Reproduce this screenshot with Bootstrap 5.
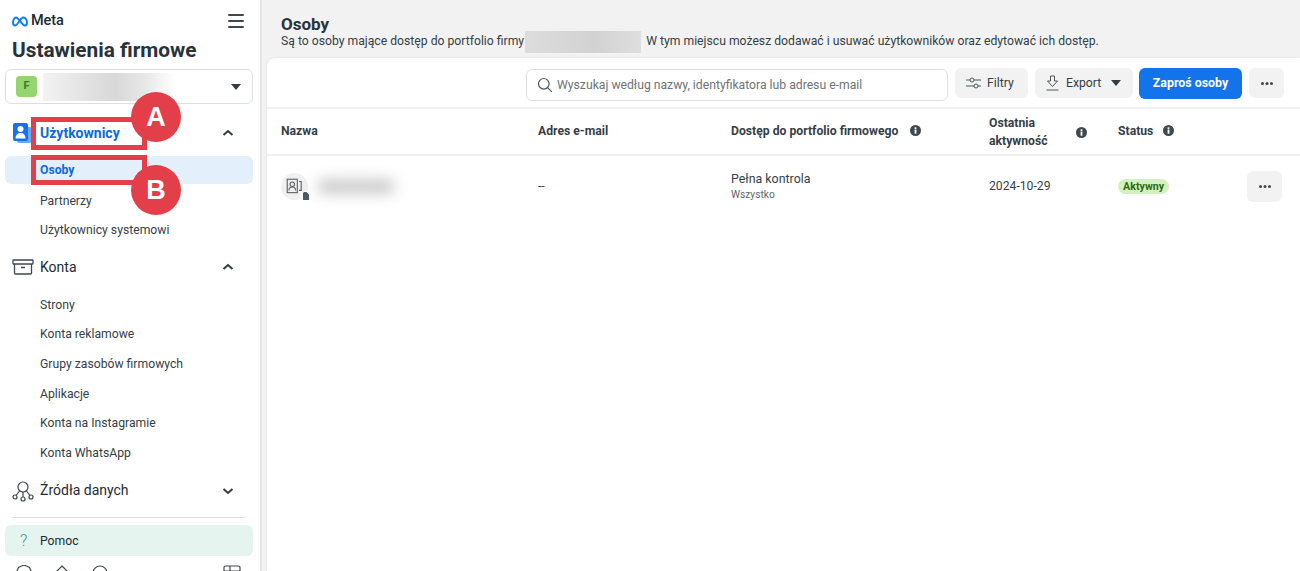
<!DOCTYPE html>
<html lang="pl">
<head>
<meta charset="utf-8">
<title>Ustawienia firmowe</title>
<link href="https://cdn.jsdelivr.net/npm/bootstrap@5.3.0/dist/css/bootstrap.min.css" rel="stylesheet">
<style>
html,body{height:571px;overflow:hidden}
body{font-family:Roboto,"Liberation Sans",sans-serif;background:#f2f2f2;color:#1c2b33;font-size:12.2px}
.shell{height:571px;overflow:hidden}
.side{width:262px;flex:none;background:#fff;border-right:2px solid #e4e6e8;height:571px;overflow:hidden;position:relative}
.logo-row{height:42px;padding:0 16px 0 12px}
.meta-gap{gap:3px}
.meta-word{font-size:14.5px;font-weight:500;color:#1c2b33;letter-spacing:-.1px}
.side-title{font-size:20.8px;font-weight:700;line-height:24px;padding-left:12px;height:27px;margin:-4px 0 4px;color:#283239}
.biz{margin:0 5px;width:248px;height:35px;border:1px solid #dcdfe2;border-radius:6px;padding:0 11px 0 10px}
.biz-badge{width:21px;height:21px;border-radius:4px;background:#94d56f;color:#3c7a23;font-size:11px;font-weight:700}
.biz-blur{width:132px;height:28px;background:linear-gradient(90deg,#f3f3f3,#e6e6e6 25%,#d8d8d8 55%,#e8e8e8 78%,#fff);margin-left:6px}
.caret{width:0;height:0;border-left:5.5px solid transparent;border-right:5.5px solid transparent;border-top:6px solid #333c42}
.group{height:30px;padding:0 26px 0 12px;font-size:14px;color:#1c2b33}
.group-blue{margin-top:14px;color:#0a6ae0;font-weight:700}
.group svg.gi{width:22px;height:22px;margin-right:6px;flex:none}
.chev{width:12px;height:8px;flex:none}
.sub{height:29.6px;padding-left:40px;font-size:12.2px;color:#353f46;margin:0 5px 0 0}
.sub-on{height:28px;margin:8px 7px 2px 5px;padding-left:35px;background:#e4effc;border-radius:6px;color:#0a6ae0;font-weight:700}
.konta{margin-top:7px}
.strony{margin-top:8px}
.zrodla{margin-top:8px}
.sep{margin:11px 15px 7px 12px;border-top:1px solid #dfe1e3}
.help{margin:0 7px 0 5px;height:31px;background:#e5f4ee;border-radius:6px;padding:1px 0 0 15px;font-size:12.2px;color:#1c2b33}
.help-q{width:20px;color:#3d8f99;font-size:16px;line-height:1;font-weight:300}
.foot{padding:9px 19px 0 16px;height:24px}
.foot svg{width:16px;height:16px;margin-right:22px;flex:none}
.foot svg.last{margin-right:0;width:18px;margin-left:auto}
.main{flex:1;min-width:0;padding-left:5px}
.head{height:58px;padding:14px 0 0 14px}
.head h1{font-size:17px;font-weight:700;line-height:20px;margin:0;color:#283239}
.head p{font-size:12.2px;line-height:15px;margin:0;color:#353f46}
.head-blur{display:inline-block;width:116px;height:22px;background:linear-gradient(90deg,#dcdcdc,#d2d2d2 60%,#dedede);vertical-align:middle;margin:-8px 2px -8px 1px}
.panel{background:#fff;border-radius:8px 0 0 0;height:513px;box-shadow:0 0 3px rgba(0,0,0,.08)}
.tools{height:51px;padding:10px 16px 0 0;border-bottom:2px solid #f2f2f2;gap:7px}
.search{width:422px;height:32px;border:1px solid #dcdfe2;border-radius:6px;padding-left:10px;color:#6d7478;font-size:12.2px;margin-top:1px}
.search svg{width:16px;height:16px;margin-right:4px}
.tbtn{height:30px;background:#f2f2f2;border:0;border-radius:6px;font-size:12.2px;color:#353f46;padding:0}
.tbtn svg{flex:none}
.f-btn{width:73px;padding-left:11px;gap:6px}
.e-btn{width:98px;padding:0 12px 0 11px;gap:7px}
.dots-btn{width:35px}
.inv{width:103px;background:#1273eb;color:#fff;font-weight:700;height:31px;margin-left:-1px;font-size:12.4px}
.inv:hover{background:#1273eb;color:#fff}
.dots{width:12px;height:3px}
.grid-t{table-layout:fixed;width:100%;margin:0}
.grid-t th,.grid-t td{border:0;padding:0 0 0 14px;vertical-align:middle;font-size:12.2px;background:transparent}
.grid-t thead th{height:46px;padding-bottom:1px;line-height:18px;font-weight:700;color:#353f46;border-bottom:2px solid #f0f0f0}
.grid-t thead th.th-two{padding-bottom:0;padding-top:1px}
.grid-t tbody td{height:61px;color:#353f46}
.c1{width:257px}.c2{width:193px}.c3{width:258px}.c4{width:129px}
.info{width:11px;height:11px;margin-left:11px;vertical-align:-1px}
.info-a{margin-right:17px}
.info-s{margin-left:10px}
.info-d{margin-left:12px}
.ava{width:27px;height:27px;border-radius:50%;background:#f0f0f0;position:relative;flex:none}
.ava svg.a1{width:19px;height:19px}
.lockb{position:absolute;right:-3px;bottom:-2px;width:11px;height:11px;background:#fff;border-radius:50%}
.name-blur{width:78px;height:15px;background:#cbcbcb;border-radius:8px;filter:blur(7px);margin-left:9px}
.wsz{font-size:10.2px;color:#5e666b;line-height:15px}
.pelna{line-height:16px;font-size:12.4px;margin-top:1px}
.pill{display:inline-block;background:#d3f0bf;color:#2f6b0d;font-size:10.7px;font-weight:700;line-height:15px;border-radius:8px;padding:0 5px}
.act-cell{padding-right:18px}
.row-act{width:35px;height:31px;background:#f2f2f2;border:0;border-radius:6px;padding:0}
.ann{position:absolute;border:5px solid #e23f4a;background:transparent;pointer-events:none}
.ann-a{left:31px;top:117px;width:116px;height:33px}
.ann-b{left:31px;top:155px;width:116px;height:30px}
.mark-c{position:absolute;width:50px;height:50px;border-radius:50%;background:#e23f4a;color:#fff;font:700 27px/50px "Liberation Sans",Arial,sans-serif;text-align:center}
.mark-a{left:131px;top:92px}
.mark-b{left:131px;top:165px}
</style>
</head>
<body>
<div class="shell d-flex">
  <aside class="side">
    <div class="logo-row d-flex align-items-center justify-content-between">
      <div class="d-flex align-items-center meta-gap">
        <svg width="16" height="11" viewBox="0 0 32 22" fill="none" stroke="#0a7cff" stroke-width="3.800"><path d="M8 3C4.500 3 2 8.500 2 13c0 3.500 1.800 6 4.500 6C12 19 16 3 23 3c4 0 7 5.500 7 10 0 3.500-1.800 6-4.500 6C20 19 14 3 8 3z"/></svg>
        <span class="meta-word">Meta</span>
      </div>
      <svg width="16" height="14" viewBox="0 0 16 14" fill="#3f484e"><rect y="0" width="16" height="2" rx="1"/><rect y="6" width="16" height="2" rx="1"/><rect y="12" width="16" height="2" rx="1"/></svg>
    </div>
    <h2 class="side-title">Ustawienia firmowe</h2>
    <div class="biz d-flex align-items-center">
      <span class="biz-badge d-flex align-items-center justify-content-center">F</span>
      <span class="biz-blur"></span>
      <span class="caret ms-auto"></span>
    </div>
    <div class="group group-blue d-flex align-items-center">
      <svg class="gi" viewBox="0 0 22 22"><path d="M15 5h3a2 2 0 0 1 2 2v12a2 2 0 0 1-2 2H7a2 2 0 0 1-2-2v-1h10z" fill="#6ea8f3"/><rect x="1" y="1" width="15" height="18" rx="2" fill="#1273eb"/><circle cx="8.500" cy="7" r="3" fill="#fff"/><path d="M3.500 16.500c0-3.500 2-5.500 5-5.500s5 2 5 5.500z" fill="#fff"/></svg>
      <span>Użytkownicy</span>
      <svg class="chev ms-auto" viewBox="0 0 12 8" fill="none" stroke="#333c42" stroke-width="2"><path d="M1.500 6 6 2l4.500 4"/></svg>
    </div>
    <div class="sub sub-on d-flex align-items-center">Osoby</div>
    <div class="sub d-flex align-items-center">Partnerzy</div>
    <div class="sub d-flex align-items-center">Użytkownicy systemowi</div>
    <div class="group konta d-flex align-items-center">
      <svg class="gi" viewBox="0 0 22 22" fill="none" stroke="#3f484e" stroke-width="1.300"><rect x="1" y="4" width="20" height="4" rx=".5"/><path d="M2.500 8v9a1 1 0 0 0 1 1h15a1 1 0 0 0 1-1V8M9 11.500h4"/></svg>
      <span>Konta</span>
      <svg class="chev ms-auto" viewBox="0 0 12 8" fill="none" stroke="#333c42" stroke-width="2"><path d="M1.500 6 6 2l4.500 4"/></svg>
    </div>
    <div class="sub strony d-flex align-items-center">Strony</div>
    <div class="sub d-flex align-items-center">Konta reklamowe</div>
    <div class="sub d-flex align-items-center">Grupy zasobów firmowych</div>
    <div class="sub d-flex align-items-center">Aplikacje</div>
    <div class="sub d-flex align-items-center">Konta na Instagramie</div>
    <div class="sub d-flex align-items-center">Konta WhatsApp</div>
    <div class="group zrodla d-flex align-items-center">
      <svg class="gi" viewBox="0 0 22 22" fill="none" stroke="#3f484e" stroke-width="1.200"><circle cx="11" cy="7" r="5"/><circle cx="3" cy="17" r="2"/><circle cx="11" cy="19" r="2"/><circle cx="19" cy="17" r="2"/><path d="M7.500 11 4 15.500M11 12v5M14.500 11l3.500 4.500"/></svg>
      <span>Źródła danych</span>
      <svg class="chev ms-auto" viewBox="0 0 12 8" fill="none" stroke="#333c42" stroke-width="2"><path d="M1.500 2 6 6l4.500-4"/></svg>
    </div>
    <div class="sep"></div>
    <div class="help d-flex align-items-center"><span class="help-q">?</span><span>Pomoc</span></div>
    <div class="foot d-flex">
      <svg viewBox="0 0 16 16" fill="none" stroke="#3f484e" stroke-width="1.200"><path d="M5.500 1 7 .5h2L10.500 1l3 1.500L15 6l-1 2 1 2-1.500 3.500h-11L1 10l1-2-1-2 1.500-3.500z"/></svg>
      <svg viewBox="0 0 16 16" fill="none" stroke="#3f484e" stroke-width="1.200"><path d="M8 1l5 5v9H3V6z"/></svg>
      <svg viewBox="0 0 16 16" fill="none" stroke="#3f484e" stroke-width="1.200"><circle cx="8" cy="8" r="7"/></svg>
      <svg class="last" viewBox="0 0 18 16" fill="none" stroke="#3f484e" stroke-width="1.200"><rect x="1" y="1" width="16" height="14" rx="1.500"/><path d="M1 6h16M7 1v5"/></svg>
    </div>
    <div class="ann ann-a"></div>
    <div class="ann ann-b"></div>
    <div class="mark-c mark-a">A</div>
    <div class="mark-c mark-b">B</div>
  </aside>
  <main class="main">
    <div class="head">
      <h1>Osoby</h1>
      <p>Są to osoby mające dostęp do portfolio firmy<span class="head-blur"></span> W tym miejscu możesz dodawać i usuwać użytkowników oraz edytować ich dostęp.</p>
    </div>
    <div class="panel">
      <div class="tools d-flex justify-content-end align-items-start">
        <div class="search d-flex align-items-center">
          <svg viewBox="0 0 16 16" fill="none" stroke="#4d565c" stroke-width="1.200"><circle cx="6.800" cy="6.800" r="5.300"/><path d="m10.800 10.800 4 4"/></svg>
          <span>Wyszukaj według nazwy, identyfikatora lub adresu e-mail</span>
        </div>
        <button class="btn tbtn f-btn d-flex align-items-center" type="button">
          <svg width="15" height="12" viewBox="0 0 15 12" fill="none" stroke="#4d565c" stroke-width="1"><path d="M0 3h4M8 3h7M0 9h8M12 9h3"/><circle cx="6" cy="3" r="2"/><circle cx="10" cy="9" r="2"/></svg>
          <span>Filtry</span>
        </button>
        <button class="btn tbtn e-btn d-flex align-items-center" type="button">
          <svg width="13" height="16" viewBox="0 0 13 16" fill="none" stroke="#4d565c" stroke-width="1"><path d="M.5 15h12M4.500 1h4v5h3L6.500 11.500 1.500 6h3z"/></svg>
          <span>Export</span>
          <span class="caret ms-auto"></span>
        </button>
        <button class="btn tbtn inv" type="button">Zaproś osoby</button>
        <button class="btn tbtn dots-btn d-flex align-items-center justify-content-center" type="button">
          <svg class="dots" viewBox="0 0 12 3" fill="#3f484e"><circle cx="1.500" cy="1.500" r="1.500"/><circle cx="6" cy="1.500" r="1.500"/><circle cx="10.500" cy="1.500" r="1.500"/></svg>
        </button>
      </div>
      <table class="table grid-t">
        <colgroup><col class="c1"><col class="c2"><col class="c3"><col class="c4"><col></colgroup>
        <thead>
          <tr>
            <th>Nazwa</th>
            <th>Adres e-mail</th>
            <th>Dostęp do portfolio firmowego<svg class="info info-d" viewBox="0 0 12 12"><circle cx="6" cy="6" r="6" fill="#3f484e"/><rect x="5" y="5" width="2" height="4.500" fill="#fff"/><rect x="5" y="2.500" width="2" height="1.800" fill="#fff"/></svg></th>
            <th class="th-two"><span class="d-flex align-items-center"><span class="flex-grow-1">Ostatnia<br>aktywność</span><svg class="info info-a" viewBox="0 0 12 12"><circle cx="6" cy="6" r="6" fill="#3f484e"/><rect x="5" y="5" width="2" height="4.500" fill="#fff"/><rect x="5" y="2.500" width="2" height="1.800" fill="#fff"/></svg></span></th>
            <th>Status<svg class="info info-s" viewBox="0 0 12 12"><circle cx="6" cy="6" r="6" fill="#3f484e"/><rect x="5" y="5" width="2" height="4.500" fill="#fff"/><rect x="5" y="2.500" width="2" height="1.800" fill="#fff"/></svg></th>
          </tr>
        </thead>
        <tbody>
          <tr>
            <td><div class="d-flex align-items-center">
              <span class="ava d-flex align-items-center justify-content-center">
                <svg class="a1" viewBox="0 0 17 17" fill="none" stroke="#5b6368" stroke-width="1"><rect x="2" y="2" width="9" height="12"/><path d="M12.500 4h2v8h-2"/><circle cx="6.500" cy="6.500" r="2"/><path d="M3.500 12c0-2 1.500-3 3-3s3 1 3 3"/></svg>
                <span class="lockb d-flex align-items-center justify-content-center"><svg width="6" height="8" viewBox="0 0 6 8" fill="#4a5a66"><path d="M1 0h2.500L6 2.500V8H0V1z"/></svg></span>
              </span>
              <span class="name-blur"></span>
            </div></td>
            <td>--</td>
            <td><div class="pelna">Pełna kontrola</div><div class="wsz">Wszystko</div></td>
            <td>2024-10-29</td>
            <td><div class="act-cell d-flex align-items-center justify-content-between">
              <span class="pill">Aktywny</span>
              <button class="btn row-act d-flex align-items-center justify-content-center" type="button"><svg class="dots" viewBox="0 0 12 3" fill="#3f484e"><circle cx="1.500" cy="1.500" r="1.500"/><circle cx="6" cy="1.500" r="1.500"/><circle cx="10.500" cy="1.500" r="1.500"/></svg></button>
            </div></td>
          </tr>
        </tbody>
      </table>
    </div>
  </main>
</div>
</body>
</html>
